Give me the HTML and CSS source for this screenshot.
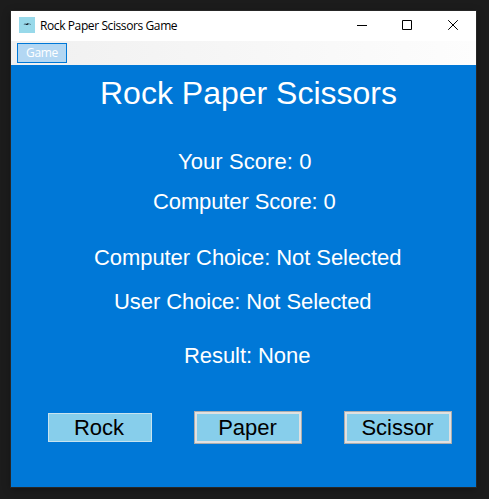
FILE: index.html
```html
<!DOCTYPE html>
<html lang="en">
<head>
<meta charset="utf-8">
<title>Rock Paper Scissors Game</title>
<link rel="stylesheet" href="styles.css">
</head>
<body>
<main class="window">
  <header class="titlebar">
    <svg class="app-icon" width="16" height="16" viewBox="0 0 16 16"><rect width="16" height="16" fill="#98d9ea"/><path d="M4.5 7.5l1-1h1.5v1.5zM10 6.5h1l1 1.5h-1z" fill="#4b7180"/><path d="M7 7l2-1 1 1-1.5 1H7z" fill="#17222b"/></svg>
    <span class="caption">Rock Paper Scissors Game</span>
    <svg class="control" width="46" height="30" viewBox="0 0 46 30" stroke="#000" fill="none"><path d="M19 14.500h10"/></svg>
    <svg class="control" width="46" height="30" viewBox="0 0 46 30" stroke="#000" fill="none"><path d="M18.500 9.500h9v9h-9z"/></svg>
    <svg class="control" width="46" height="30" viewBox="0 0 46 30" stroke="#000" fill="none"><path d="M18.200 9.200l9.600 9.600M27.800 9.200l-9.600 9.600"/></svg>
  </header>
  <nav class="menubar"><span class="menu-item">Game</span></nav>
  <section class="game">
    <h1 class="title">Rock Paper Scissors</h1>
    <p class="label your-score">Your Score: 0</p>
    <p class="label computer-score">Computer Score: 0</p>
    <p class="label computer-choice">Computer Choice: Not Selected</p>
    <p class="label user-choice">User Choice: Not Selected</p>
    <p class="label result">Result: None</p>
    <div class="choices">
      <button class="choice rock">Rock</button>
      <button class="choice">Paper</button>
      <button class="choice">Scissor</button>
    </div>
  </section>
</main>
</body>
</html>
```
FILE: styles.css
```css
* { box-sizing: border-box; }
html, body { height: 100%; }
body {
  margin: 0;
  padding: 11px 13px 12px 11px;
  background: #1c1c1c;
  overflow: hidden;
}
.window {
  width: 465px;
  height: 476px;
  background: #0078d7;
  box-shadow: 0 0 0 1px #262626, 0 2px 8px rgba(0, 0, 0, .35);
}
.titlebar {
  display: flex;
  align-items: center;
  height: 30px;
  padding-left: 8px;
  background: #fff;
}
.app-icon { margin-top: -2px; }
.caption {
  flex: 1;
  margin-left: 5px;
  font: 12px/30px "Open Sans", sans-serif;
  letter-spacing: -.4px;
  color: #000;
  white-space: nowrap;
}
.menubar {
  height: 24px;
  padding: 2px 6px;
  background: linear-gradient(90deg, #f0f0f0, #fdfdfd);
}
.menu-item {
  display: block;
  width: 50px;
  height: 20px;
  border: 1px solid #0078d7;
  background: #b3d7f3;
  color: #fff;
  font: 12px/18px "Open Sans", sans-serif;
  letter-spacing: -.3px;
  text-align: center;
}
.game {
  font-family: "Liberation Sans", Arial, sans-serif;
  color: #fff;
  white-space: nowrap;
}
.title {
  margin: 0 0 0 89px;
  padding-top: 10px;
  font-size: 32px;
  font-weight: 400;
  line-height: 36px;
}
.label {
  margin: 0;
  font-size: 22px;
  line-height: 26px;
  letter-spacing: -.07px;
}
.your-score { margin: 38px 0 0 167px; letter-spacing: .08px; }
.computer-score { margin: 14px 0 0 142px; letter-spacing: -.12px; }
.computer-choice { margin: 30px 0 0 83px; }
.user-choice { margin: 18px 0 0 103px; }
.result { margin: 28px 0 0 173px; }
.choices {
  display: flex;
  align-items: center;
  margin: 42px 0 0 37px;
  height: 33px;
  gap: 42px;
}
.choice {
  width: 108px;
  height: 33px;
  padding: 0 1px 0 0;
  border: 1px solid #adadad;
  box-shadow: inset 0 0 0 2px #e1e1e1;
  background: #87ceeb;
  color: #000;
  font: 22px/29px "Liberation Sans", Arial, sans-serif;
}
.rock {
  width: 104px;
  height: 29px;
  padding-right: 2px;
  border-color: #c8e3ef;
  box-shadow: none;
  line-height: 27px;
}
```
